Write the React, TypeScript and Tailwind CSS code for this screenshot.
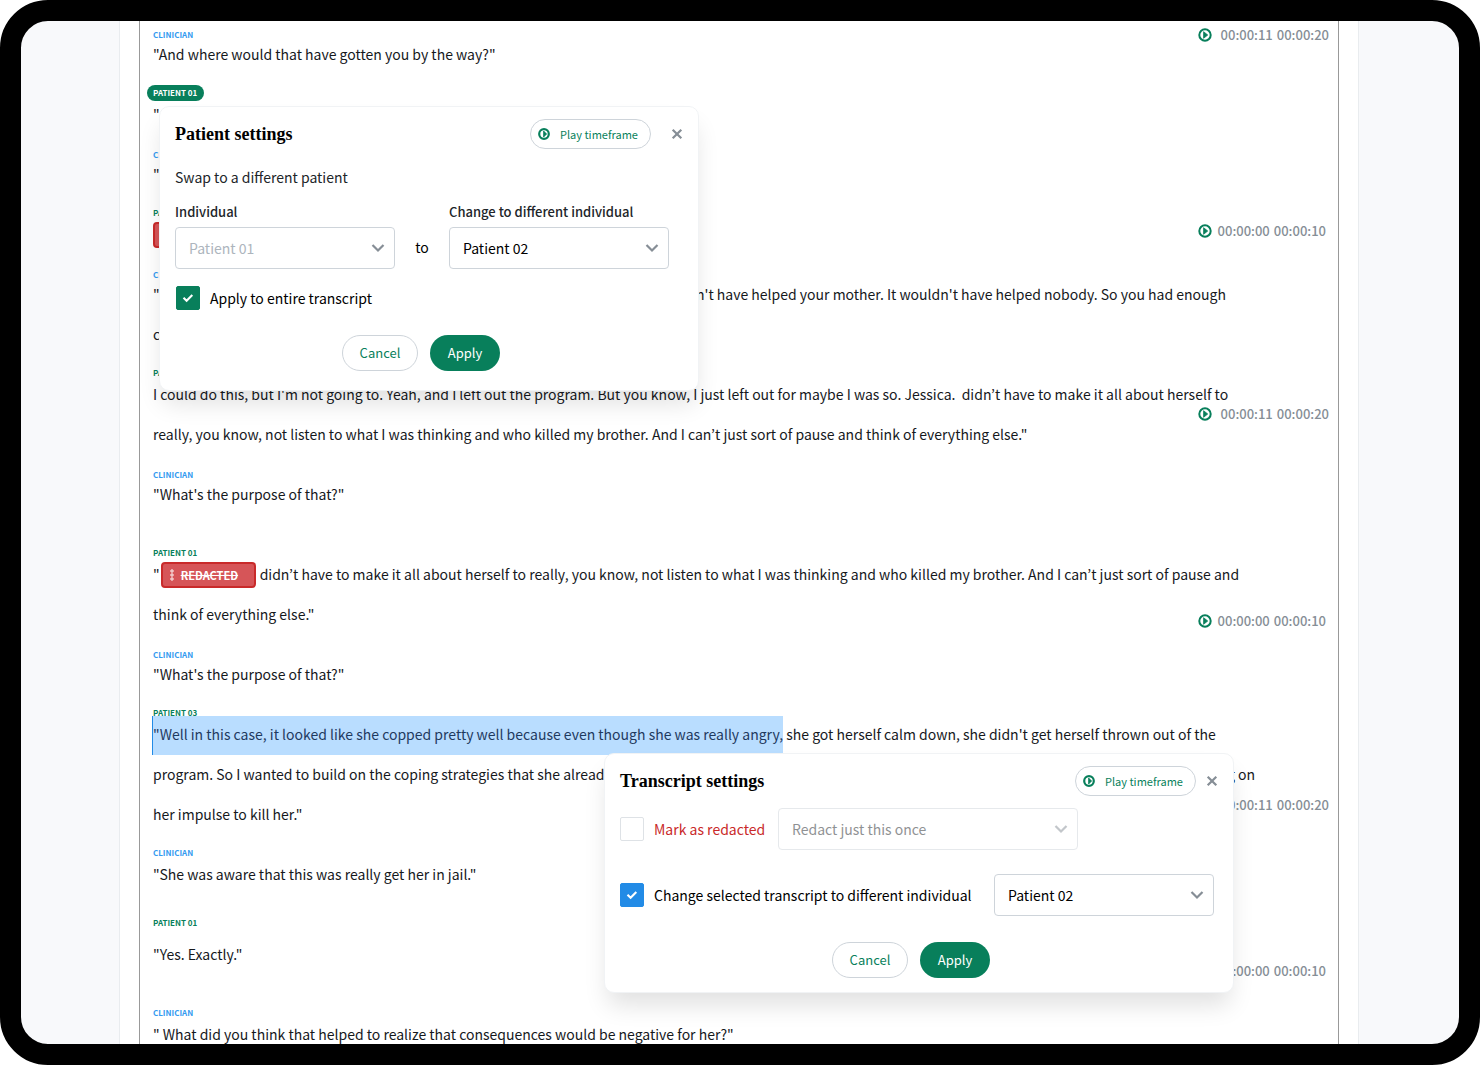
import React, { useState } from 'react';

type Utterance = {
  speaker: string;
  role: 'clinician' | 'patient';
  gap: string;
  lines: React.ReactNode[];
  space?: string;
  active?: boolean;
};

const Redacted = () => (
  <span className="inline-flex items-center w-[95px] h-[26px] mb-0.5 ml-px mr-1 pl-1.5 gap-1.5 align-middle rounded border-2 border-[#c92a2a] bg-[#d65558] text-white text-[11px] leading-5 font-bold">
    <svg width="6" height="12" viewBox="0 0 6 12" fill="none" stroke="currentColor">
      <circle cx="3" cy="2" r="1.2" />
      <circle cx="3" cy="6" r="1.2" />
      <circle cx="3" cy="10" r="1.2" />
    </svg>
    <s>REDACTED</s>
  </span>
);

const transcript: Utterance[] = [
  { speaker: 'CLINICIAN', role: 'clinician', gap: 'mt-0', lines: ['"And where would that have gotten you by the way?"'] },
  { speaker: 'PATIENT 01', role: 'patient', gap: 'mt-[18px]', space: 'pb-0.5', active: true, lines: ['"'] },
  { speaker: 'CLINICIAN', role: 'clinician', gap: 'mt-5', lines: ['"'] },
  { speaker: 'PATIENT 01', role: 'patient', gap: 'mt-[18px]', space: 'pb-0.5', lines: [<span className="-ml-px"><Redacted /></span>] },
  {
    speaker: 'CLINICIAN',
    role: 'clinician',
    gap: 'mt-5',
    lines: [
      <span className="flex">
        <span className="w-[543px]">"</span>
        n't have helped your mother. It wouldn't have helped nobody. So you had enough
      </span>,
      'c',
    ],
  },
  {
    speaker: 'PATIENT 01',
    role: 'patient',
    gap: 'mt-[18px]',
    space: 'pb-0.5',
    lines: [
      "I could do this, but I'm not going to. Yeah, and I left out the program. But you know, I just left out for maybe I was so. Jessica.\u00a0 didn’t have to make it all about herself to",
      'really, you know, not listen to what I was thinking and who killed my brother. And I can’t just sort of pause and think of everything else."',
    ],
  },
  { speaker: 'CLINICIAN', role: 'clinician', gap: 'mt-5', lines: ['"What\'s the purpose of that?"'] },
  {
    speaker: 'PATIENT 01',
    role: 'patient',
    gap: 'mt-[38px]',
    space: 'pb-0.5',
    lines: [
      <>"<Redacted />didn’t have to make it all about herself to really, you know, not listen to what I was thinking and who killed my brother. And I can’t just sort of pause and</>,
      'think of everything else."',
    ],
  },
  { speaker: 'CLINICIAN', role: 'clinician', gap: 'mt-5', lines: ['"What\'s the purpose of that?"'] },
  {
    speaker: 'PATIENT 03',
    role: 'patient',
    gap: 'mt-[18px]',
    space: 'pb-0.5',
    lines: [
      <>
        <mark className="pt-2 pb-[11px] -ml-px border-l border-[#228be6] bg-[#b9ddff] text-[#1f3a5f]">"Well in this case, it looked like she copped pretty well because even though she was really angry,</mark>
        {" she got herself calm down, she didn't get herself thrown out of the"}
      </>,
      <span className="flex">
        <span className="w-[1074px]">program. So I wanted to build on the coping strategies that she already</span>
        g on
      </span>,
      'her impulse to kill her."',
    ],
  },
  { speaker: 'CLINICIAN', role: 'clinician', gap: 'mt-[18px]', space: 'pb-0.5', lines: ['"She was aware that this was really get her in jail."'] },
  { speaker: 'PATIENT 01', role: 'patient', gap: 'mt-7', space: 'pb-3', lines: ['"Yes. Exactly."'] },
  { speaker: 'CLINICIAN', role: 'clinician', gap: 'mt-[38px]', space: 'pb-0.5', lines: ['" What did you think that helped to realize that consequences would be negative for her?"'] },
];

const timeframes = [
  { gap: 'mt-0', inset: 'mr-[9px]', space: 'gap-[9px]', from: '00:00:11', to: '00:00:20' },
  { gap: 'mt-44', inset: 'mr-3', space: 'gap-1.5', from: '00:00:00', to: '00:00:10' },
  { gap: 'mt-[163px]', inset: 'mr-[9px]', space: 'gap-[9px]', from: '00:00:11', to: '00:00:20' },
  { gap: 'mt-[187px]', inset: 'mr-3', space: 'gap-1.5', from: '00:00:00', to: '00:00:10' },
  { gap: 'mt-[164px]', inset: 'mr-[9px]', space: 'gap-[9px]', from: '00:00:11', to: '00:00:20' },
  { gap: 'mt-[146px]', inset: 'mr-3', space: 'gap-1.5', from: '00:00:00', to: '00:00:10' },
];

const PlayIcon = () => (
  <svg width="14" height="14" viewBox="0 0 14 14" className="shrink-0 text-[#087f5b]">
    <circle cx="7" cy="7" r="5.7" fill="none" stroke="currentColor" strokeWidth="2" />
    <path d="M5.6 3.7 9.7 7 5.6 10.3Z" fill="currentColor" stroke="currentColor" strokeWidth="0.8" strokeLinejoin="round" />
  </svg>
);

const PlaySmallIcon = () => (
  <svg width="12" height="12" viewBox="0 0 12 12" className="shrink-0 text-[#087f5b]">
    <circle cx="6" cy="6" r="4.8" fill="none" stroke="currentColor" strokeWidth="2.2" />
    <path d="M5.6 3 8.6 6 5.6 9Z" fill="currentColor" stroke="currentColor" strokeWidth="0.8" strokeLinejoin="round" />
  </svg>
);

const Chevron = () => (
  <svg width="14" height="10" viewBox="0 0 14 10" fill="none" className="col-start-1 row-start-1 self-center justify-self-end mr-2.5 pointer-events-none text-[#868e96]">
    <path d="M1.5 2 7 7.5 12.5 2" stroke="currentColor" strokeWidth="2.2" />
  </svg>
);

type SelectProps = {
  id: string;
  label?: string;
  options: string[];
  className: string;
  disabled?: boolean;
};

const Select = ({ id, label, options, className, disabled }: SelectProps) => (
  <div className="grid items-center">
    <select
      id={id}
      aria-label={label}
      disabled={disabled}
      className={`col-start-1 row-start-1 appearance-none h-[42px] pl-[13px] pr-8 rounded border bg-white text-sm leading-5 opacity-100 ${className}`}
    >
      {options.map((option) => (
        <option key={option}>{option}</option>
      ))}
    </select>
    <Chevron />
  </div>
);

type CheckboxProps = {
  label: string;
  color: string;
  textColor: string;
  initial: boolean;
};

const Checkbox = ({ label, color, textColor, initial }: CheckboxProps) => {
  const [checked, setChecked] = useState(initial);

  return (
    <label className={`flex items-center gap-2.5 text-sm leading-6 whitespace-nowrap ${textColor}`}>
      <span className="grid place-items-center">
        <input
          type="checkbox"
          checked={checked}
          onChange={(e) => setChecked(e.target.checked)}
          className={`col-start-1 row-start-1 appearance-none size-6 rounded-xs border border-[#dee2e6] bg-white ${color}`}
        />
        {checked && (
          <svg width="12" height="10" viewBox="0 0 12 10" fill="none" className="col-start-1 row-start-1 pointer-events-none">
            <path d="M1.5 4.8 4.6 7.8 10.3 2" stroke="white" strokeWidth="2.1" />
          </svg>
        )}
      </span>
      {label}
    </label>
  );
};

const PopoverHeader = ({ title, gap }: { title: string; gap: string }) => (
  <div className="flex items-center justify-between">
    <h2 className="font-['Liberation_Serif',serif] font-bold text-lg leading-6">{title}</h2>
    <div className={`flex items-center ${gap}`}>
      <button type="button" className="flex items-center gap-2.5 w-[121px] h-[30px] pl-[7px] rounded-full border border-[#ced4da] text-[11px] leading-4 text-[#087f5b]">
        <PlaySmallIcon />
        Play timeframe
      </button>
      <button type="button" aria-label="Close">
        <svg width="12" height="12" viewBox="0 0 12 12" fill="none">
          <path d="M1.7 1.7 10.3 10.3 M10.3 1.7 1.7 10.3" stroke="#868e96" strokeWidth="2.2" />
        </svg>
      </button>
    </div>
  </div>
);

const PopoverActions = () => (
  <div className="flex justify-center gap-3 pr-4 text-[13px] leading-5">
    <button type="button" className="w-[76px] h-9 rounded-full border border-[#ced4da] text-[#087f5b]">Cancel</button>
    <button type="button" className="w-[70px] h-9 rounded-full bg-[#087f5b] text-white">Apply</button>
  </div>
);

const popoverClass = 'absolute rounded-[10px] border border-[#f1f3f5] bg-white px-[15px] pt-3 text-black shadow-[0_16px_24px_-4px_rgba(0,0,0,0.12)]';

const PatientSettings = () => (
  <section className={`${popoverClass} left-[138px] top-[85px] w-[540px] pb-[19px]`}>
    <PopoverHeader title="Patient settings" gap="gap-5" />
    <p className="mt-4 text-sm leading-6 text-[#212529]">Swap to a different patient</p>
    <div className="flex items-end mt-[13px]">
      <div>
        <label htmlFor="individual" className="block mb-[5px] text-[13px] leading-5 font-medium text-[#212529]">Individual</label>
        <Select id="individual" options={['Patient 01']} disabled className="w-[220px] border-[#ced4da] text-[#adb5bd]" />
      </div>
      <span className="w-[54px] h-[42px] text-center text-sm leading-10">to</span>
      <div>
        <label htmlFor="new-individual" className="block mb-[5px] text-[13px] leading-5 font-medium text-[#212529]">Change to different individual</label>
        <Select id="new-individual" options={['Patient 02', 'Patient 03']} className="w-[220px] border-[#ced4da]" />
      </div>
    </div>
    <div className="mt-[17px] mb-[25px] pl-px">
      <Checkbox label="Apply to entire transcript" initial color="checked:bg-[#087f5b] checked:border-[#087f5b]" textColor="text-black" />
    </div>
    <PopoverActions />
  </section>
);

const TranscriptSettings = () => (
  <section className={`${popoverClass} left-[583px] top-[732px] w-[630px] pb-3.5`}>
    <PopoverHeader title="Transcript settings" gap="gap-2.5" />
    <div className="flex items-center mt-3">
      <div className="w-[158px]">
        <Checkbox label="Mark as redacted" initial={false} color="checked:bg-[#c92a2a] checked:border-[#c92a2a]" textColor="text-[#c92a2a]" />
      </div>
      <div className="opacity-50">
        <Select id="redact-scope" label="Redaction scope" options={['Redact just this once', 'Redact everywhere']} className="w-[300px] border-[#ced4da] text-[#212529]" />
      </div>
    </div>
    <div className="flex items-center mt-6 mb-[26px]">
      <div className="w-[374px]">
        <Checkbox label="Change selected transcript to different individual" initial color="checked:bg-[#228be6] checked:border-[#228be6]" textColor="text-black" />
      </div>
      <Select id="selected-individual" label="Different individual" options={['Patient 02', 'Patient 03']} className="w-[220px] border-[#ced4da]" />
    </div>
    <PopoverActions />
  </section>
);

export default function App() {
  return (
    <div className="relative h-screen overflow-hidden rounded-[48px] border-[21px] border-black bg-[#f8f9fb] font-['Noto_Sans_CJK_KR',sans-serif]">
      <main className="h-full ml-[98px] mr-[100px] px-[19px] border-x border-[#e9ecef] bg-white">
        <div className="grid h-full overflow-hidden border-x border-[#999999] pt-1">
          <div className="col-start-1 row-start-1 pl-[13px] whitespace-nowrap text-sm text-[#16191d]">
            {transcript.map((item, index) => (
              <article key={index} className={item.gap}>
                <h3 className={`text-[8px] leading-5 font-bold ${item.space ?? ''} ${item.role === 'clinician' ? 'text-[#339af0]' : 'text-[#087f5b]'}`}>
                  {item.active ? (
                    <span className="flex items-center h-5">
                      <span className="w-[57px] h-4 -ml-1.5 pl-1.5 rounded-full bg-[#087f5b] text-white leading-4">{item.speaker}</span>
                    </span>
                  ) : (
                    item.speaker
                  )}
                </h3>
                <div className="-mt-[11px] -mb-[9px]">
                  {item.lines.map((line, i) => (
                    <p key={i} className="h-10 leading-10">{line}</p>
                  ))}
                </div>
              </article>
            ))}
          </div>
          <div className="col-start-1 row-start-1 justify-self-end">
            {timeframes.map((frame, index) => (
              <div key={index} className={`flex items-center justify-end h-5 text-[13px] leading-5 font-medium text-[#868e96] ${frame.gap} ${frame.inset} ${frame.space}`}>
                <button type="button" aria-label="Play timeframe">
                  <PlayIcon />
                </button>
                <span className="flex gap-1">
                  <time>{frame.from}</time>
                  <time>{frame.to}</time>
                </span>
              </div>
            ))}
          </div>
        </div>
      </main>
      <PatientSettings />
      <TranscriptSettings />
    </div>
  );
}
